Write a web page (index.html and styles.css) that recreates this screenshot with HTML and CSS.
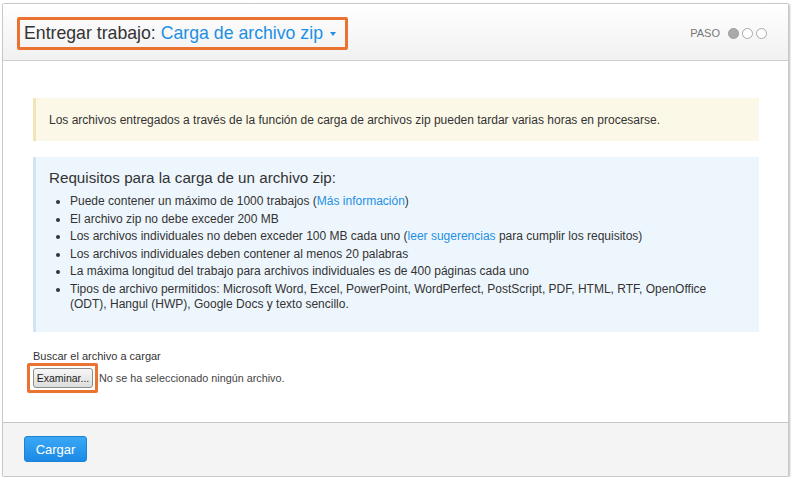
FILE: index.html
```html
<!DOCTYPE html>
<html lang="es">
<head>
<meta charset="utf-8">
<title>Entregar trabajo</title>
<link rel="stylesheet" href="styles.css">
</head>
<body>
<div class="panel">
  <div class="header">
    <div class="title-box">
      <span class="title">Entregar trabajo:</span>
      <span class="title-link">Carga de archivo zip</span>
      <span class="caret"></span>
    </div>
    <div class="steps">
      <span class="steps-label">PASO</span>
      <span class="dot dot-on"></span>
      <span class="dot"></span>
      <span class="dot"></span>
    </div>
  </div>
  <div class="content">
    <div class="alert">Los archivos entregados a través de la función de carga de archivos zip pueden tardar varias horas en procesarse.</div>
    <div class="info">
      <h3 class="info-title">Requisitos para la carga de un archivo zip:</h3>
      <ul class="info-list">
        <li>Puede contener un máximo de 1000 trabajos (<a class="link" href="#">Más información</a>)</li>
        <li>El archivo zip no debe exceder 200 MB</li>
        <li>Los archivos individuales no deben exceder 100 MB cada uno (<a class="link" href="#">leer sugerencias</a> para cumplir los requisitos)</li>
        <li>Los archivos individuales deben contener al menos 20 palabras</li>
        <li>La máxima longitud del trabajo para archivos individuales es de 400 páginas cada uno</li>
        <li>Tipos de archivo permitidos: Microsoft Word, Excel, PowerPoint, WordPerfect, PostScript, PDF, HTML, RTF, OpenOffice (ODT), Hangul (HWP), Google Docs y texto sencillo.</li>
      </ul>
    </div>
    <div class="file-label">Buscar el archivo a cargar</div>
    <div class="file-row">
      <div class="file-box"><button class="file-btn" type="button">Examinar...</button></div>
      <span class="file-none">No se ha seleccionado ningún archivo.</span>
    </div>
  </div>
  <div class="footer">
    <button class="submit" type="button">Cargar</button>
  </div>
</div>
</body>
</html>
```

FILE: styles.css
```css
html, body {
  margin: 0;
  padding: 0;
  background: #ffffff;
}
body {
  font-family: "Liberation Sans", Arial, sans-serif;
  color: #333333;
  padding: 3px 0 0 2px;
}
.panel {
  width: 785px;
  border: 1px solid #c9c9c9;
  border-radius: 2px;
  box-shadow: 1px 1px 2px rgba(0,0,0,0.25);
  background: #ffffff;
}
.header {
  height: 56px;
  display: flex;
  align-items: center;
  justify-content: space-between;
  padding: 0 21px 0 14px;
  background: linear-gradient(#ffffff, #f1f1f1);
  border-bottom: 1px solid #cfcfcf;
}
.title-box {
  height: 27px;
  margin-top: 2px;
  display: flex;
  align-items: center;
  padding: 0 9px 0 4px;
  border: 3px solid #ea7331;
  border-radius: 2px;
  font-size: 17.7px;
}
.title {
  color: #333333;
}
.title-link {
  color: #1d8fe4;
  margin-left: 5px;
}
.caret {
  width: 0;
  height: 0;
  margin-left: 7px;
  margin-top: 1px;
  border-left: 3.5px solid transparent;
  border-right: 3.5px solid transparent;
  border-top: 4px solid #1d8fe4;
}
.steps {
  display: flex;
  align-items: center;
  margin-top: 2px;
}
.steps-label {
  font-size: 11px;
  color: #777777;
  margin-right: 8px;
}
.dot {
  width: 9px;
  height: 9px;
  border: 1px solid #a9a9a9;
  border-radius: 50%;
  background: #ffffff;
  margin-left: 3px;
}
.dot-on {
  background: #aaaaaa;
  border-color: #9c9c9c;
  margin-left: 0;
}
.content {
  padding: 37px 29px 0 30px;
  height: 362px;
  box-sizing: border-box;
  border-bottom: 1px solid #c6c6c6;
}
.alert {
  height: 43px;
  box-sizing: border-box;
  display: flex;
  align-items: center;
  padding-left: 13px;
  border-left: 3px solid #f1e4b5;
  background: #fcf8e8;
  font-size: 12px;
  color: #333333;
}
.info {
  margin-top: 16px;
  height: 175px;
  box-sizing: border-box;
  padding: 11px 16px 0 13px;
  border-left: 3px solid #d0e4f5;
  background: #eef6fd;
}
.info-title {
  margin: 0 0 6px 0;
  font-size: 15.2px;
  font-weight: normal;
  line-height: 20px;
  color: #333333;
}
.info-list {
  margin: 0;
  padding-left: 21px;
  font-size: 12px;
  line-height: 15px;
  color: #333333;
}
.info-list li {
  margin-bottom: 2.6px;
}
.link {
  color: #1d8fe4;
  text-decoration: none;
}
.file-label {
  margin-top: 18px;
  font-size: 11px;
  line-height: 13px;
  color: #333333;
}
.file-row {
  display: flex;
  align-items: center;
  margin-top: 0;
  margin-left: -6px;
}
.file-box {
  border: 3px solid #ea7331;
  border-radius: 2px;
  padding: 2px 2px 2px 3px;
  display: flex;
}
.file-btn {
  width: 60px;
  height: 20px;
  padding: 0;
  font-family: "Liberation Sans", Arial, sans-serif;
  font-size: 10.5px;
  color: #222222;
  border: 1px solid #8e8e8e;
  border-radius: 3px;
  background: linear-gradient(#f6f6f6, #dddddd);
}
.file-none {
  font-size: 10.8px;
  color: #444444;
  margin-left: 1px;
}
.footer {
  height: 53px;
  box-sizing: border-box;
  padding: 13px 0 0 21px;
  background: #f4f4f4;
}
.submit {
  width: 63px;
  height: 26px;
  font-family: "Liberation Sans", Arial, sans-serif;
  font-size: 13px;
  color: #ffffff;
  border: 1px solid #1b82d6;
  border-radius: 3px;
  background: linear-gradient(#3aa7f5, #1b8ae6);
}
```
